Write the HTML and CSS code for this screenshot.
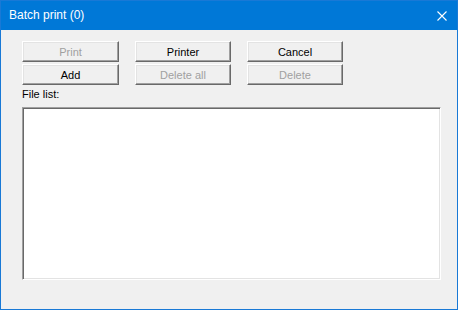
FILE: index.html
```html
<!DOCTYPE html>
<html>
<head>
<meta charset="utf-8">
<link rel="stylesheet" href="styles.css">
</head>
<body>
<div class="window">
  <div class="titlebar">
    <span class="title">Batch print (0)</span>
    <svg class="close" width="10" height="10" viewBox="0 0 10 10"><path d="M0.5 0.5 L9.5 9.5 M9.5 0.5 L0.5 9.5" stroke="#fff" stroke-width="1.1" fill="none"/></svg>
  </div>
  <div class="client">
    <div class="buttons">
      <button class="btn disabled">Print</button>
      <button class="btn">Printer</button>
      <button class="btn">Cancel</button>
      <button class="btn">Add</button>
      <button class="btn disabled">Delete all</button>
      <button class="btn disabled">Delete</button>
    </div>
    <div class="label">File list:</div>
    <div class="listbox"></div>
  </div>
</div>
</body>
</html>
```

FILE: styles.css
```css
html, body {
  margin: 0;
  padding: 0;
  background: #f0f0f0;
}
.window {
  width: 458px;
  height: 310px;
  box-sizing: border-box;
  border: 1px solid #1979d6;
  background: #f0f0f0;
  display: flex;
  flex-direction: column;
  font-family: "Liberation Sans", Arial, sans-serif;
  font-size: 11px;
  color: #000;
}
.titlebar {
  height: 29px;
  flex: none;
  background: #0078d7;
  display: flex;
  align-items: center;
  justify-content: space-between;
  padding: 0 10px 0 8px;
}
.title {
  color: #fff;
  font-family: "Liberation Sans", Arial, sans-serif;
  font-size: 12px;
  margin-top: -1px;
}
.close {
  display: block;
}
.client {
  padding: 11px 16px 0 21px;
  display: flex;
  flex-direction: column;
}
.buttons {
  display: grid;
  grid-template-columns: 97px 96px 96px;
  column-gap: 16px;
  row-gap: 2px;
}
.btn {
  height: 21px;
  margin: 0;
  padding: 0;
  box-sizing: border-box;
  background: #f0f0f0;
  border: 1px solid;
  border-color: #ffffff #696969 #696969 #ffffff;
  box-shadow: inset -1px -1px 0 #a0a0a0, inset 1px 1px 0 #e3e3e3;
  font-family: "Liberation Sans", Arial, sans-serif;
  font-size: 11px;
  color: #000;
  border-radius: 0;
}
.btn.disabled {
  color: #a0a0a0;
}
.label {
  margin-top: 3px;
  line-height: 13px;
  height: 19px;
}
.listbox {
  width: 419px;
  height: 173px;
  box-sizing: border-box;
  background: #fff;
  border: 1px solid;
  border-color: #a0a0a0 #ffffff #ffffff #a0a0a0;
  box-shadow: inset 1px 1px 0 #696969, inset -1px -1px 0 #e3e3e3;
}
```
